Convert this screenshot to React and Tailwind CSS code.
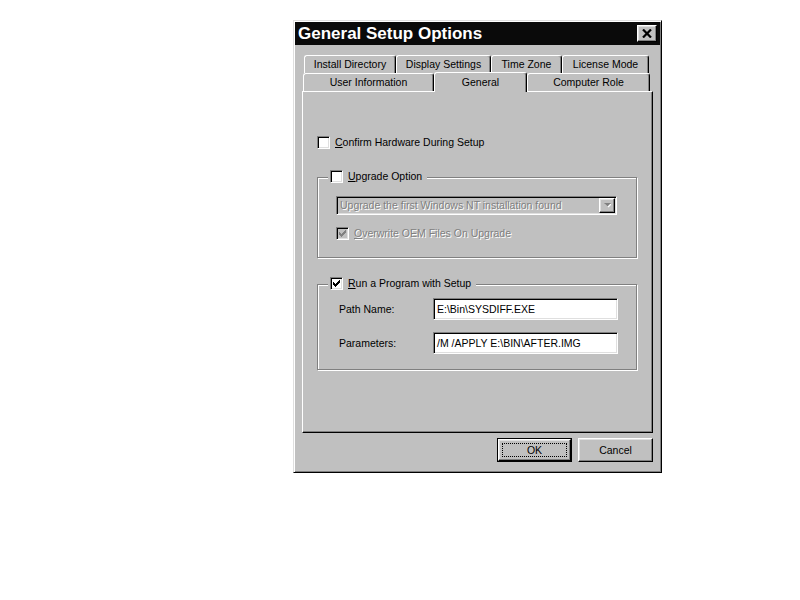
import React from 'react';

const raised =
  'border border-t-white border-l-white border-r-black border-b-black shadow-[inset_-1px_-1px_0_#808080,inset_1px_1px_0_#dfdfdf]';
const sunken =
  'border border-t-[#808080] border-l-[#808080] border-r-white border-b-white shadow-[inset_1px_1px_0_#000,inset_-1px_-1px_0_#dfdfdf]';
const etched = 'border border-[#808080] shadow-[1px_1px_0_#fff,inset_1px_1px_0_#fff]';
const dimText = 'text-[#808080] [text-shadow:1px_1px_0_#fff]';

const CheckBox = ({ checked, disabled }) => (
  <span
    className={`flex h-[13px] w-[13px] shrink-0 items-center justify-center ${sunken} ${
      disabled ? 'bg-[#c0c0c0]' : 'bg-white'
    }`}
  >
    {checked && (
      <svg width="7" height="7" viewBox="0 0 7 7" shapeRendering="crispEdges">
        <g fill={disabled ? '#808080' : '#000'}>
          <rect x="6" y="0" width="1" height="1" />
          <rect x="5" y="1" width="2" height="1" />
          <rect x="0" y="2" width="1" height="1" />
          <rect x="4" y="2" width="3" height="1" />
          <rect x="0" y="3" width="2" height="1" />
          <rect x="3" y="3" width="3" height="1" />
          <rect x="0" y="4" width="5" height="1" />
          <rect x="1" y="5" width="3" height="1" />
          <rect x="2" y="6" width="1" height="1" />
        </g>
      </svg>
    )}
  </span>
);

const Tab = ({ label, className }) => (
  <div
    className={`flex items-center justify-center rounded-t-[3px] border-t border-l border-r border-t-white border-l-white border-r-black bg-[#c0c0c0] shadow-[inset_-1px_0_0_#808080] ${className}`}
  >
    {label}
  </div>
);

const Field = ({ label, value }) => (
  <div className="flex h-[22px] items-center">
    <span className="w-[94px]">{label}</span>
    <div className={`flex h-[22px] w-[185px] items-center bg-white pl-[3px] ${sunken}`}>{value}</div>
  </div>
);

export default function App() {
  return (
    <div className="min-h-screen bg-white pl-[293px] pt-[20px] text-[10.5px] leading-[13px] text-black [font-family:'Liberation_Sans',Arial,sans-serif]">
      <div className="flex w-[369px] flex-col border border-t-[#dfdfdf] border-l-[#dfdfdf] border-r-black border-b-black bg-[#c0c0c0] p-[1px] shadow-[inset_1px_1px_0_#fff,inset_-1px_-1px_0_#808080]">
        {/* title bar */}
        <div className="flex h-[23px] items-center justify-between bg-[#0a0a0a] pl-[3px] pr-[3px]">
          <span className="text-[17px] font-bold leading-none text-white">General Setup Options</span>
          <div className={`flex h-[17px] w-[20px] items-center justify-center bg-[#c0c0c0] ${raised}`}>
            <svg width="10" height="9" viewBox="0 0 10 9">
              <path d="M1 0.5 L9 8.5 M9 0.5 L1 8.5" stroke="#000" strokeWidth="2.2" />
            </svg>
          </div>
        </div>

        <div className="px-[7px] pb-[9px] pt-[10px]">
          {/* tabs */}
          <div className="ml-[2px] flex h-[18px]">
            <Tab label="Install Directory" className="h-[18px] w-[92px]" />
            <Tab label="Display Settings" className="h-[18px] w-[95px]" />
            <Tab label="Time Zone" className="h-[18px] w-[71px]" />
            <Tab label="License Mode" className="h-[18px] w-[87px]" />
          </div>
          <div className="relative z-10 ml-[1px] flex h-[18px] items-end">
            <Tab label="User Information" className="h-[18px] w-[131px]" />
            <Tab label="General" className="-mb-[1px] h-[20px] w-[93px] pb-[1px]" />
            <Tab label="Computer Role" className="h-[18px] w-[123px]" />
          </div>

          {/* panel */}
          <div className="h-[342px] border border-t-white border-l-white border-r-black border-b-black pl-[14px] pt-[44px] shadow-[inset_-1px_-1px_0_#808080]">
            <div className="flex items-center gap-[5px]">
              <CheckBox />
              <span>
                <u>C</u>onfirm Hardware During Setup
              </span>
            </div>

            <div className={`relative mt-[28px] w-[320px] pb-[17px] pl-[18px] pt-[18px] ${etched}`}>
              <div className="absolute -top-[8px] left-[10px] flex items-center gap-[5px] bg-[#c0c0c0] pl-[2px] pr-[5px]">
                <CheckBox />
                <span>
                  <u>U</u>pgrade Option
                </span>
              </div>
              <div className={`flex h-[19px] w-[281px] items-center bg-[#c0c0c0] pl-[3px] ${sunken}`}>
                <span className={dimText}>Upgrade the first Windows NT installation found</span>
                <div className={`ml-auto mr-[1px] flex h-[15px] w-[16px] items-center justify-center ${raised}`}>
                  <svg width="7" height="5" viewBox="0 0 7 5">
                    <path d="M1 1 L8 1 L4.5 4.5 Z" fill="#fff" />
                    <path d="M0 0 L7 0 L3.5 3.5 Z" fill="#808080" />
                  </svg>
                </div>
              </div>
              <div className="mt-[12px] flex items-center gap-[5px]">
                <CheckBox checked disabled />
                <span className={dimText}>
                  <u>O</u>verwrite OEM Files On Upgrade
                </span>
              </div>
            </div>

            <div className={`relative mt-[26px] w-[320px] pb-[15px] pl-[21px] pt-[13px] ${etched}`}>
              <div className="absolute -top-[8px] left-[10px] flex items-center gap-[5px] bg-[#c0c0c0] pl-[2px] pr-[5px]">
                <CheckBox checked />
                <span>
                  <u>R</u>un a Program with Setup
                </span>
              </div>
              <div className="flex flex-col gap-[12px]">
                <Field label="Path Name:" value="E:\Bin\SYSDIFF.EXE" />
                <Field label="Parameters:" value="/M /APPLY E:\BIN\AFTER.IMG" />
              </div>
            </div>
          </div>

          {/* buttons */}
          <div className="mt-[5px] flex justify-end gap-[6px]">
            <div className="h-[24px] w-[75px] border border-black">
              <div className={`flex h-full w-full items-center justify-center p-[3px] ${raised}`}>
                <div className="flex h-full w-full items-center justify-center border border-dotted border-black">
                  OK
                </div>
              </div>
            </div>
            <div className={`flex h-[24px] w-[75px] items-center justify-center ${raised}`}>Cancel</div>
          </div>
        </div>
      </div>
    </div>
  );
}
